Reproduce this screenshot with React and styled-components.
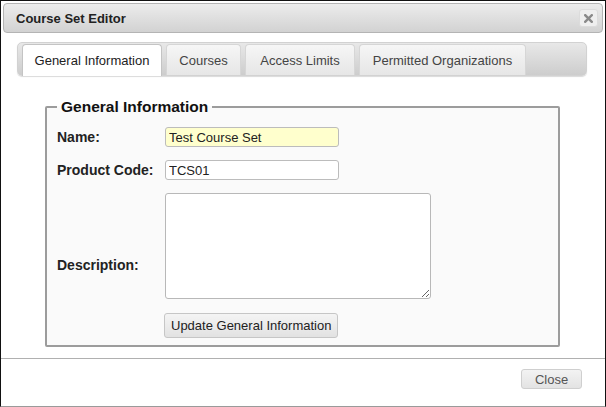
import React from "react";
import styled, { createGlobalStyle } from "styled-components";

const Global = createGlobalStyle`
  html, body { margin: 0; padding: 0; background: #fff; }
  * { box-sizing: border-box; }
  body { font-family: "Liberation Sans", Arial, sans-serif; }
`;

const Dialog = styled.div`
  width: 606px;
  height: 407px;
  border: 1px solid #111;
  border-bottom-color: #9a9a9a;
  background: #fff;
  display: flex;
  flex-direction: column;
`;

const TitleBar = styled.div`
  margin: 2px 2px 0 2px;
  height: 30px;
  border: 1px solid #b4b4b4;
  border-radius: 4px;
  background: linear-gradient(to bottom, #ececec, #d2d2d2);
  display: flex;
  align-items: center;
  justify-content: space-between;
  padding: 0 4px 0 12px;
`;

const Title = styled.span`
  font-size: 13px;
  font-weight: bold;
  color: #222;
`;

const CloseX = styled.button`
  width: 19px;
  height: 18px;
  padding: 0;
  border: 1px solid #dcdcdc;
  border-radius: 3px;
  background: #efefef;
  display: flex;
  align-items: center;
  justify-content: center;
`;

const Content = styled.div`
  padding: 9px 18px 0 16px;
`;

const TabBar = styled.div`
  height: 34px;
  border: 1px solid #d2d2d2;
  border-radius: 5px;
  background: linear-gradient(to bottom, #e8e8e8, #cdcdcd);
  box-shadow: 0 1px 1px rgba(0, 0, 0, 0.15);
  display: flex;
  align-items: flex-end;
  gap: 4px;
  padding: 0 0 0 4px;
`;

const Tab = styled.div`
  width: ${(p) => p.$w}px;
  display: flex;
  align-items: center;
  justify-content: center;
  white-space: nowrap;
  font-size: 13px;
  color: ${(p) => (p.$active ? "#222" : "#444")};
  border: 1px solid ${(p) => (p.$active ? "#c4c4c4" : "#d6d6d6")};
  border-bottom: none;
  border-radius: 4px 4px 0 0;
  background: ${(p) =>
    p.$active ? "#fff" : "linear-gradient(to bottom, #f6f6f6, #e6e6e6)"};
  margin-bottom: ${(p) => (p.$active ? "-1px" : "0")};
  height: ${(p) => (p.$active ? "32px" : "31px")};
`;

const Panel = styled.div`
  padding: 22px 27px 11px 28px;
`;

const Fieldset = styled.fieldset`
  margin: 0;
  min-width: 0;
  border: 2px solid #9c9c9c;
  border-radius: 2px;
  background: #fafafa;
  padding: 12px 10px 7px 10px;
`;

const Legend = styled.legend`
  padding: 0 4px;
  font-size: 15.5px;
  font-weight: bold;
  color: #111;
  line-height: 17px;
`;

const Form = styled.div`
  display: grid;
  grid-template-columns: 108px auto;
  row-gap: 13px;
  align-items: center;
  justify-items: start;
`;

const Label = styled.label`
  font-size: 14px;
  font-weight: bold;
  color: #222;
  align-self: ${(p) => (p.$bottom ? "end" : "center")};
  padding-bottom: ${(p) => (p.$bottom ? "26px" : "0")};
`;

const Input = styled.input`
  width: 174px;
  height: 20px;
  border: 1px solid #bcbcbc;
  border-radius: 3px;
  padding: 0 3px;
  font-family: "Liberation Sans", Arial, sans-serif;
  font-size: 13px;
  color: #222;
  background: ${(p) => (p.$highlight ? "#ffffcd" : "#fff")};
  outline: none;
`;

const TextArea = styled.textarea`
  width: 266px;
  height: 106px;
  border: 1px solid #b8b8b8;
  border-radius: 3px;
  background: #fff;
  font-family: "Liberation Sans", Arial, sans-serif;
  font-size: 13px;
  outline: none;
  resize: both;
  display: block;
`;

const Spacer = styled.div``;

const Button = styled.button`
  height: 25px;
  padding: 0 6px;
  border: 1px solid #c6c6c6;
  border-radius: 3px;
  background: linear-gradient(to bottom, #f4f4f4, #e2e2e2);
  font-family: "Liberation Sans", Arial, sans-serif;
  font-size: 13px;
  color: #222;
  margin-top: ${(p) => (p.$offset ? "1px" : "0")};
  margin-left: ${(p) => (p.$offset ? "-1px" : "0")};
`;

const Footer = styled.div`
  border-top: 1px solid #b0b0b0;
  padding: 10px 23px 0 0;
  display: flex;
  justify-content: flex-end;
`;

const CloseButton = styled(Button)`
  height: 20px;
  width: 61px;
  padding: 0;
  color: #555;
  border-color: #cfcfcf;
  background: linear-gradient(to bottom, #f3f3f3, #e3e3e3);
`;

const tabs = [
  { label: "General Information", w: 140, active: true },
  { label: "Courses", w: 75 },
  { label: "Access Limits", w: 110 },
  { label: "Permitted Organizations", w: 167 },
];

export default function App() {
  return (
    <>
      <Global />
      <Dialog>
        <TitleBar>
          <Title>Course Set Editor</Title>
          <CloseX aria-label="close">
            <svg width="9" height="9" viewBox="0 0 9 9">
              <path
                d="M1.2 1.2 L7.8 7.8 M7.8 1.2 L1.2 7.8"
                stroke="#8a8a8a"
                strokeWidth="2.4"
                strokeLinecap="square"
              />
            </svg>
          </CloseX>
        </TitleBar>
        <Content>
          <TabBar>
            {tabs.map((t) => (
              <Tab key={t.label} $w={t.w} $active={t.active}>
                {t.label}
              </Tab>
            ))}
          </TabBar>
          <Panel>
            <Fieldset>
              <Legend>General Information</Legend>
              <Form>
                <Label>Name:</Label>
                <Input $highlight defaultValue="Test Course Set" />
                <Label>Product Code:</Label>
                <Input defaultValue="TCS01" />
                <Label $bottom>Description:</Label>
                <TextArea defaultValue="" />
                <Spacer />
                <Button $offset>Update General Information</Button>
              </Form>
            </Fieldset>
          </Panel>
        </Content>
        <Footer>
          <CloseButton>Close</CloseButton>
        </Footer>
      </Dialog>
    </>
  );
}
